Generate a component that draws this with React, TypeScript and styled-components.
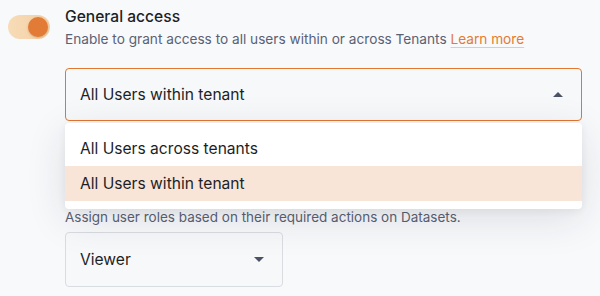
import React from 'react';
import styled, { createGlobalStyle } from 'styled-components';

const GlobalStyle = createGlobalStyle`
  html, body {
    margin: 0;
    padding: 0;
    background: #f8f9fb;
  }
  body {
    font-family: Inter, "Noto Sans", "Liberation Sans", sans-serif;
    color: #1d1f27;
    -webkit-font-smoothing: antialiased;
  }
`;

const Page = styled.div`
  width: 600px;
  height: 296px;
  overflow: hidden;
  display: flex;
  gap: 15px;
  padding: 5px 0 0 8px;
  box-sizing: border-box;
`;

const Toggle = styled.div<{ $on: boolean }>`
  flex: none;
  position: relative;
  width: 42px;
  height: 24px;
  margin-top: 10px;
  border-radius: 12px;
  background: ${p => (p.$on ? 'linear-gradient(90deg, #f7dcb8, #f3cfa4)' : '#d9dce2')};
  &::after {
    content: '';
    position: absolute;
    top: 2px;
    left: ${p => (p.$on ? '20px' : '2px')};
    width: 20px;
    height: 20px;
    border-radius: 50%;
    background: #e27b36;
    box-shadow: 0 1px 2px rgba(120, 60, 10, 0.25);
  }
`;

const Content = styled.div`
  flex: none;
  width: 517px;
  display: flex;
  flex-direction: column;
`;

const Title = styled.div`
  font-size: 15.6px;
  line-height: 24px;
  font-weight: 500;
  color: #1d1f27;
`;

const Hint = styled.div<{ $size?: number }>`
  font-size: ${p => p.$size ?? 13.65}px;
  line-height: 20px;
  color: #5a6174;
`;

const Link = styled.a`
  color: #e27b36;
  text-decoration: underline;
  text-decoration-color: #f3c7a6;
  text-underline-offset: 3px;
  cursor: pointer;
`;

const SelectWrap = styled.div<{ $width?: number; $top: number }>`
  position: relative;
  width: ${p => (p.$width ? `${p.$width}px` : '100%')};
  margin-top: ${p => p.$top}px;
`;

const SelectBox = styled.div<{ $open?: boolean }>`
  box-sizing: border-box;
  height: ${p => (p.$open ? 53 : 55)}px;
  display: flex;
  align-items: center;
  justify-content: space-between;
  padding: 0 18px 0 14px;
  border: ${p => (p.$open ? '1.5px solid #e2772f' : '1px solid #d9dce1')};
  border-radius: 4px;
  background: #f7f8fa;
  font-size: 15.6px;
  color: #1d1f27;
`;

const Caret = styled.span<{ $up?: boolean }>`
  width: 0;
  height: 0;
  border-left: 5px solid transparent;
  border-right: 5px solid transparent;
  ${p => (p.$up ? 'border-bottom: 5px solid #4b5264;' : 'border-top: 5px solid #4b5264;')}
`;

const Menu = styled.ul`
  position: absolute;
  z-index: 2;
  top: calc(100% + 2px);
  left: 0;
  right: 0;
  margin: 0;
  padding: 8px 0;
  list-style: none;
  background: #ffffff;
  border-radius: 4px;
  box-shadow: 0 10px 40px rgba(30, 35, 50, 0.12), 0 2px 8px rgba(30, 35, 50, 0.06);
`;

const Option = styled.li<{ $active?: boolean }>`
  height: 35px;
  display: flex;
  align-items: center;
  padding: 0 15px;
  font-size: 15.6px;
  color: #1d1f27;
  background: ${p => (p.$active ? '#f8e5d8' : 'transparent')};
`;

const Section = styled.div`
  margin-top: 86px;
  display: flex;
  flex-direction: column;
`;

const App = () => {
  const options = ['All Users across tenants', 'All Users within tenant'];
  const selected = options[1];

  return (
    <>
      <GlobalStyle />
      <Page>
        <Toggle $on />
        <Content>
          <Title>General access</Title>
          <Hint>
            Enable to grant access to all users within or across Tenants <Link>Learn more</Link>
          </Hint>
          <SelectWrap $top={19}>
            <SelectBox $open>
              {selected}
              <Caret $up />
            </SelectBox>
            <Menu>
              {options.map(o => (
                <Option key={o} $active={o === selected}>
                  {o}
                </Option>
              ))}
            </Menu>
          </SelectWrap>
          <Section>
            <Hint $size={13.5}>Assign user roles based on their required actions on Datasets.</Hint>
            <SelectWrap $width={218} $top={5}>
              <SelectBox>
                Viewer
                <Caret />
              </SelectBox>
            </SelectWrap>
          </Section>
        </Content>
      </Page>
    </>
  );
};

export default App;
